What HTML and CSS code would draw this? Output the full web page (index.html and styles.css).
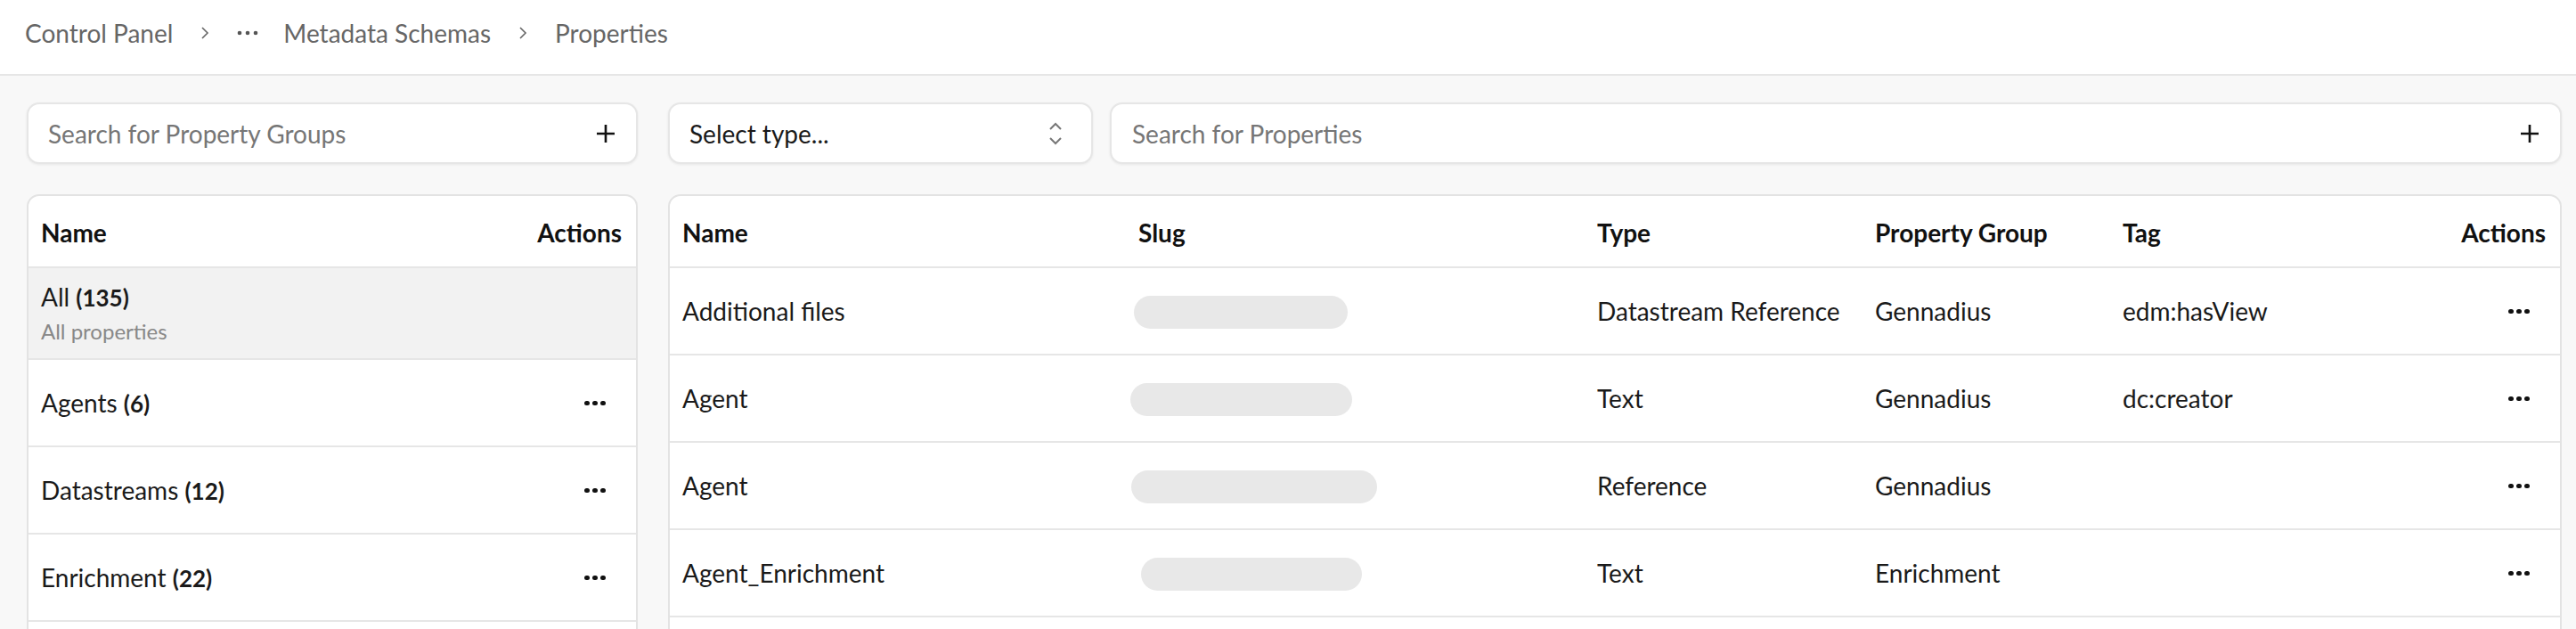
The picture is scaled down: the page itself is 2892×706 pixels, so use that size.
FILE: index.html
```html
<!DOCTYPE html>
<html lang="en">

<head>
    <meta charset="UTF-8">
    <meta name="viewport" content="width=device-width, initial-scale=1.0">
    <title>Properties</title>
    <link rel="stylesheet" href="styles.css">
</head>

<body>
    <header class="topbar">
        <nav class="crumbs">
            <a class="crumb" href="#">Control Panel</a>
            <span class="sep">
                <svg width="10" height="16" viewBox="0 0 10 16"><polyline points="2,2 8,8 2,14" fill="none" stroke="#666" stroke-width="1.6"/></svg>
            </span>
            <span class="more">
                <svg width="24" height="6" viewBox="0 0 24 6"><circle cx="3" cy="3" r="2.3" fill="#555"/><circle cx="12" cy="3" r="2.3" fill="#555"/><circle cx="21" cy="3" r="2.3" fill="#555"/></svg>
            </span>
            <a class="crumb" href="#">Metadata Schemas</a>
            <span class="sep">
                <svg width="10" height="16" viewBox="0 0 10 16"><polyline points="2,2 8,8 2,14" fill="none" stroke="#666" stroke-width="1.6"/></svg>
            </span>
            <span class="crumb current">Properties</span>
        </nav>
    </header>

    <main class="layout">
        <!-- property groups -->
        <section class="side">
            <div class="toolbar">
                <div class="field">
                    <input type="text" placeholder="Search for Property Groups">
                    <button class="plus" type="button">
                        <svg width="22" height="22" viewBox="0 0 22 22"><path d="M11 1v20M1 11h20" stroke="#111" stroke-width="2.6"/></svg>
                    </button>
                </div>
            </div>
            <div class="card">
                <table class="grid groups">
                    <colgroup><col><col class="col-actions-sm"></colgroup>
                    <thead>
                        <tr><th>Name</th><th class="right">Actions</th></tr>
                    </thead>
                    <tbody>
                        <tr class="selected">
                            <td colspan="2" class="all-cell">
                                <div class="group-title">All <b class="count">(135)</b></div>
                                <div class="group-sub">All properties</div>
                            </td>
                        </tr>
                        <tr>
                            <td>Agents <b class="count">(6)</b></td>
                            <td class="right"><button class="dots" type="button"><i></i><i></i><i></i></button></td>
                        </tr>
                        <tr>
                            <td>Datastreams <b class="count">(12)</b></td>
                            <td class="right"><button class="dots" type="button"><i></i><i></i><i></i></button></td>
                        </tr>
                        <tr>
                            <td>Enrichment <b class="count">(22)</b></td>
                            <td class="right"><button class="dots" type="button"><i></i><i></i><i></i></button></td>
                        </tr>
                        <tr class="filler"><td colspan="2"></td></tr>
                    </tbody>
                </table>
            </div>
        </section>

        <!-- properties -->
        <section class="content">
            <div class="toolbar">
                <div class="field select">
                    <span class="select-value">Select type...</span>
                    <svg width="16" height="26" viewBox="0 0 16 26"><polyline points="2,8 8,2 14,8" fill="none" stroke="#777" stroke-width="2"/><polyline points="2,18 8,24 14,18" fill="none" stroke="#777" stroke-width="2"/></svg>
                </div>
                <div class="field grow">
                    <input type="text" placeholder="Search for Properties">
                    <button class="plus" type="button">
                        <svg width="22" height="22" viewBox="0 0 22 22"><path d="M11 1v20M1 11h20" stroke="#111" stroke-width="2.6"/></svg>
                    </button>
                </div>
            </div>
            <div class="card">
                <table class="grid props">
                    <colgroup>
                        <col class="c-name"><col class="c-slug"><col class="c-type"><col class="c-group"><col class="c-tag"><col class="c-actions">
                    </colgroup>
                    <thead>
                        <tr>
                            <th>Name</th><th>Slug</th><th>Type</th><th>Property Group</th><th>Tag</th><th class="right">Actions</th>
                        </tr>
                    </thead>
                    <tbody>
                        <tr>
                            <td>Additional files</td>
                            <td><span class="blur" style="width: 240px; margin-left: -5px"></span></td>
                            <td>Datastream Reference</td>
                            <td>Gennadius</td>
                            <td>edm:hasView</td>
                            <td class="right"><button class="dots" type="button"><i></i><i></i><i></i></button></td>
                        </tr>
                        <tr>
                            <td>Agent</td>
                            <td><span class="blur" style="width: 249px; margin-left: -9px"></span></td>
                            <td>Text</td>
                            <td>Gennadius</td>
                            <td>dc:creator</td>
                            <td class="right"><button class="dots" type="button"><i></i><i></i><i></i></button></td>
                        </tr>
                        <tr>
                            <td>Agent</td>
                            <td><span class="blur" style="width: 276px; margin-left: -8px"></span></td>
                            <td>Reference</td>
                            <td>Gennadius</td>
                            <td></td>
                            <td class="right"><button class="dots" type="button"><i></i><i></i><i></i></button></td>
                        </tr>
                        <tr>
                            <td>Agent_Enrichment</td>
                            <td><span class="blur" style="width: 248px; margin-left: 3px"></span></td>
                            <td>Text</td>
                            <td>Enrichment</td>
                            <td></td>
                            <td class="right"><button class="dots" type="button"><i></i><i></i><i></i></button></td>
                        </tr>
                        <tr class="filler"><td colspan="6"></td></tr>
                    </tbody>
                </table>
            </div>
        </section>
    </main>
</body>

</html>
```

FILE: styles.css
```css
body {
    margin: 0;
    background-color: #f8f8f8;
    font-family: Lato, 'Open Sans', sans-serif;
    font-size: 28px;
    color: #1a1a1a;
}

.topbar {
    height: 83px;
    background-color: white;
    border-bottom: 2px solid #e6e6e6;
    box-sizing: content-box;
}

.crumbs {
    display: flex;
    align-items: center;
    gap: 28px;
    height: 74px;
    padding-left: 28px;
    line-height: 36px;
}
.crumb {
    color: #666;
    text-decoration: none;
}
.sep {
    display: flex;
    width: 16px;
    justify-content: center;
}
.more {
    display: flex;
    width: 24px;
}

.layout {
    display: grid;
    grid-template-columns: 686px 1fr;
    gap: 34px;
    padding: 30px 16px 0 30px;
}

.toolbar {
    display: flex;
    gap: 19px;
    height: 69px;
    margin-bottom: 34px;
}

.field {
    display: flex;
    align-items: center;
    flex: 1;
    background-color: white;
    border: 2px solid #e6e6e6;
    border-radius: 14px;
    box-shadow: 0 1px 3px rgba(0, 0, 0, 0.07);
    box-sizing: border-box;
}
.field.select {
    flex: 0 0 477px;
    justify-content: space-between;
    padding: 0 32px 0 22px;
}
.field.grow {
    flex: 1;
}
.select-value {
    color: #1a1a1a;
}

.field input {
    flex: 1;
    min-width: 0;
    border: none;
    outline: none;
    background: transparent;
    font-family: inherit;
    font-size: 28px;
    color: #1a1a1a;
    padding: 0 0 0 22px;
}
.content .field input {
    padding-left: 23px;
}
.field input::placeholder {
    color: #767676;
}

.plus {
    display: flex;
    align-items: center;
    justify-content: center;
    width: 40px;
    height: 40px;
    margin-right: 14px;
    padding: 0;
    border: none;
    background: transparent;
}

.card {
    background-color: white;
    border: 2px solid #e3e3e3;
    border-radius: 14px;
    overflow: hidden;
}

.grid {
    width: 100%;
    border-collapse: collapse;
    table-layout: fixed;
}
.grid th {
    height: 80px;
    padding: 2px 14px 0;
    text-align: left;
    font-weight: 700;
    color: #111;
    border-bottom: 2px solid #e6e6e6;
    box-sizing: border-box;
}
.grid td {
    height: 98px;
    padding: 0 14px;
    border-bottom: 2px solid #e6e6e6;
    white-space: nowrap;
    box-sizing: border-box;
}
.grid .right {
    text-align: right;
    padding-right: 16px;
}
.grid td.right {
    padding-right: 16px;
}

.col-actions-sm {
    width: 160px;
}
.c-name { width: 512px; }
.c-slug { width: 515px; }
.c-type { width: 312px; }
.c-group { width: 278px; }
.c-tag { width: 365px; }
.c-actions { width: 140px; }

.selected td {
    background-color: #f2f2f2;
}
.grid td.all-cell {
    height: 103px;
    padding: 14px 14px 10px;
    vertical-align: top;
}
.group-title {
    line-height: 36px;
}
.group-sub {
    line-height: 40px;
    font-size: 24px;
    color: #888;
}
.count {
    font-size: 26px;
    font-weight: 700;
}

.dots {
    display: inline-flex;
    align-items: center;
    justify-content: center;
    gap: 3.5px;
    width: 60px;
    height: 40px;
    padding: 0;
    border: none;
    background: transparent;
    vertical-align: middle;
}
.dots i {
    display: block;
    width: 5.5px;
    height: 5.5px;
    border-radius: 50%;
    background-color: #111;
}

.blur {
    display: inline-block;
    height: 37px;
    border-radius: 19px;
    background-color: #e8e8e8;
    vertical-align: middle;
}

.grid tr.filler td {
    height: 120px;
    border-bottom: none;
}
```
